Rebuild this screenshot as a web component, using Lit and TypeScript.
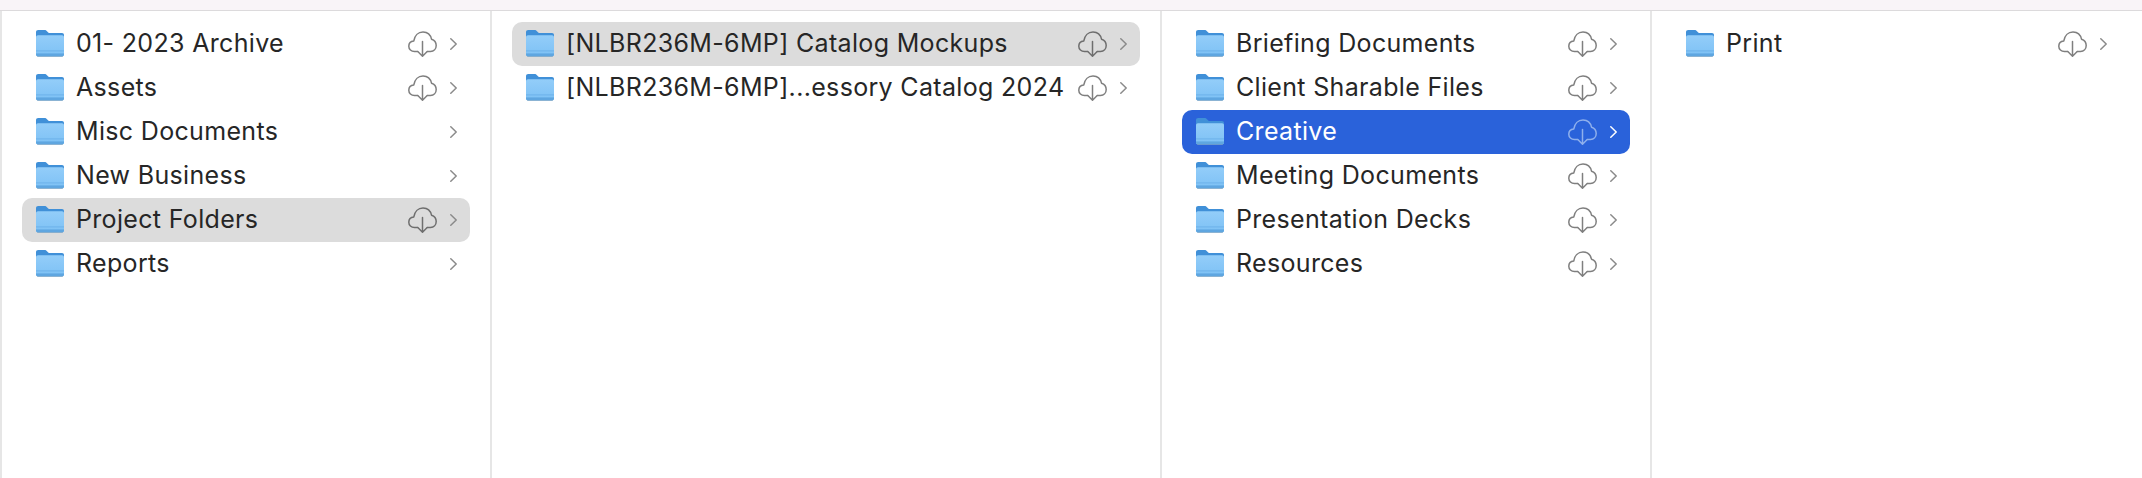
import { LitElement, html, css, svg } from 'lit';
import { customElement } from 'lit/decorators.js';
import { classMap } from 'lit/directives/class-map.js';

interface rowType {
  name: string,
  cloud?: boolean,
  sel?: 'gray' | 'blue',
}

const columns: { cls: string, rows: rowType[] }[] = [
  {
    cls: 'c1',
    rows: [
      { name: '01- 2023 Archive', cloud: true },
      { name: 'Assets', cloud: true },
      { name: 'Misc Documents' },
      { name: 'New Business' },
      { name: 'Project Folders', cloud: true, sel: 'gray' },
      { name: 'Reports' },
    ],
  },
  {
    cls: 'c2',
    rows: [
      { name: '[NLBR236M-6MP] Catalog Mockups', cloud: true, sel: 'gray' },
      { name: '[NLBR236M-6MP]...essory Catalog 2024', cloud: true },
    ],
  },
  {
    cls: 'c3',
    rows: [
      { name: 'Briefing Documents', cloud: true },
      { name: 'Client Sharable Files', cloud: true },
      { name: 'Creative', cloud: true, sel: 'blue' },
      { name: 'Meeting Documents', cloud: true },
      { name: 'Presentation Decks', cloud: true },
      { name: 'Resources', cloud: true },
    ],
  },
  {
    cls: 'c4',
    rows: [{ name: 'Print', cloud: true }],
  },
];

const folder = svg`
  <svg class="folder" viewBox="0 0 28 27" width="28" height="27">
    <defs>
      <linearGradient id="front" x1="0" y1="0" x2="0" y2="1">
        <stop offset="0" stop-color="#93cdf9"/>
        <stop offset="1" stop-color="#7dc1f5"/>
      </linearGradient>
    </defs>
    <path d="M0 24V2.2C0 .9 .9 0 2.2 0H8.5C9.6 0 10.3 .4 11 1.2L12.2 2.4C12.7 2.9 13.2 3.1 14 3.1H26C27.2 3.1 28 3.9 28 5.1V24Z" fill="#4090d8"/>
    <path d="M0 7.2C0 6 .8 5.2 2 5.2H26C27.2 5.2 28 6 28 7.2V24.4C28 25.7 27.2 26.4 26 26.4H2C.8 26.4 0 25.7 0 24.4Z" fill="url(#front)"/>
    <rect x="0" y="20.4" width="28" height="1" fill="#6cb2ea"/>
    <rect x="0" y="23" width="28" height="1" fill="#6cb2ea"/>
    <path d="M0 24.6C0 25.8 .8 26.4 2 26.4H26C27.2 26.4 28 25.8 28 24.6V24H0Z" fill="#5fa6e0"/>
    <rect x="1" y="26.4" width="26" height=".6" fill="#8a9aa8" opacity=".6"/>
  </svg>`;

const cloud = svg`
  <svg class="cloud" viewBox="0 0 29 26" width="29" height="26" fill="none" stroke="currentColor" stroke-width="1.5" stroke-linecap="round" stroke-linejoin="round">
    <path d="M9.5 20.5H6.5C3.2 20.5 .8 18.2 .8 15.2C.8 12.4 2.9 10.2 5.8 9.9C6.6 4.6 10.2 .9 15 .9C19.4 .9 22.6 3.8 23.5 8.2C26.3 9 28.2 11.4 28.2 14.6C28.2 18 25.8 20.5 22.5 20.5H19.5"/>
    <path d="M14.5 10.5V25M9.8 20.5L14.5 25.2L19.2 20.5"/>
  </svg>`;

const chevron = svg`
  <svg class="chevron" viewBox="0 0 7 12" width="7" height="12" fill="none" stroke="currentColor" stroke-width="1.5" stroke-linecap="round" stroke-linejoin="round">
    <path d="M.8 .8L6.2 6L.8 11.2"/>
  </svg>`;

@customElement('app-root')
export class AppRoot extends LitElement {
  static styles = css`
    :host {
      display: flex;
      flex-direction: column;
      width: 2142px;
      height: 478px;
      background: #fff;
      font-family: Inter, "Noto Sans", sans-serif;
    }

    .strip {
      height: 10px;
      background: #f9f4f8;
      border-bottom: 1px solid #dcdadc;
      flex: none;
    }

    .browser {
      display: flex;
      flex: 1;
    }

    .col {
      border-right: 2px solid #e6e6e6;
      padding: 11px 20px 0;
      box-sizing: border-box;
      flex: none;
    }
    .c1 { width: 492px; border-left: 2px solid #e6e6e6; }
    .c2 { width: 670px; }
    .c3 { width: 490px; }
    .c4 { width: 490px; border-right: 0; padding-right: 22px; }

    .row {
      display: flex;
      align-items: center;
      height: 44px;
      padding: 0 13px 0 14px;
      border-radius: 10px;
      color: #262626;
      font-size: 25px;
      letter-spacing: 0.33px;
    }
    .row .cloud { color: #7f7f7f; margin-left: auto; }
    .row .chevron { color: #8a8a8a; margin-left: 13px; }
    .row .folder { flex: none; margin-right: 13px; margin-top: -1px; }
    .row .name { white-space: nowrap; margin-top: -2px; margin-left: -1px; }
    .spacer { margin-left: auto; }

    .gray { background: #dcdcdc; }
    .gray .cloud { color: #6e6e6e; }
    .blue { background: #2a62da; color: #fff; }
    .blue .cloud { color: #8fb0ec; }
    .blue .chevron { color: #fff; }
  `;

  renderRow(row: rowType) {
    const classes = {
      row: true,
      gray: row.sel === 'gray',
      blue: row.sel === 'blue',
    };
    return html`
      <div class=${classMap(classes)}>
        ${folder}
        <span class="name">${row.name}</span>
        ${row.cloud ? cloud : html`<span class="spacer"></span>`}
        ${chevron}
      </div>`;
  }

  render() {
    return html`
      <div class="strip"></div>
      <div class="browser">
        ${columns.map((col) => html`
          <div class="col ${col.cls}">
            ${col.rows.map((row) => this.renderRow(row))}
          </div>`)}
      </div>`;
  }
}
